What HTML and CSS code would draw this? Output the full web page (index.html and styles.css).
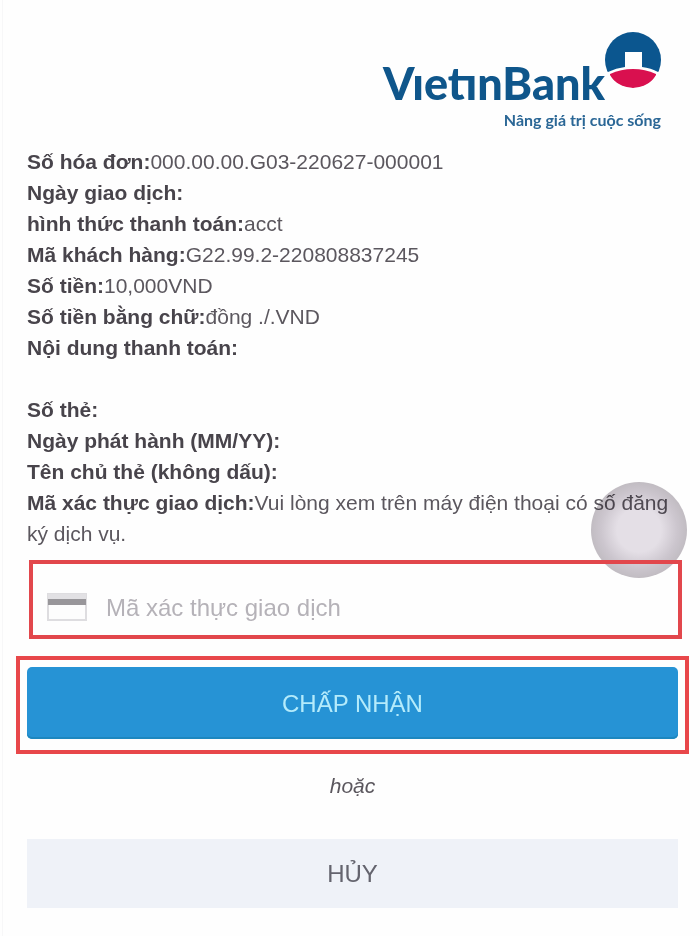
FILE: index.html
```html
<!DOCTYPE html>
<html lang="vi">
<head>
<meta charset="utf-8">
<meta name="viewport" content="width=device-width, initial-scale=1">
<title>VietinBank</title>
<link rel="stylesheet" href="styles.css">
</head>
<body>
<main class="page">
  <header class="brand">
    <div class="brand-row">
      <span class="brand-name">VıetınBank</span>
      <svg class="brand-mark" viewBox="0 0 56 56" aria-hidden="true">
        <defs><clipPath id="disc"><circle cx="28" cy="28" r="28"/></clipPath></defs>
        <g clip-path="url(#disc)">
          <path fill="#0b568f" d="M0 0H56V40H53Q46 36 37 35V20H20V35Q11 36 3 40H0Z"/>
          <path fill="#d9104f" d="M5 42Q16 37 28 37Q40 37 51 42V43Q44 56 28 56Q12 56 5 43Z"/>
        </g>
      </svg>
    </div>
    <p class="tagline">Nâng giá trị cuộc sống</p>
  </header>

  <section class="details">
    <p><b>Số hóa đơn:</b>000.00.00.G03-220627-000001</p>
    <p><b>Ngày giao dịch:</b></p>
    <p><b>hình thức thanh toán:</b>acct</p>
    <p><b>Mã khách hàng:</b>G22.99.2-220808837245</p>
    <p><b>Số tiền:</b>10,000VND</p>
    <p><b>Số tiền bằng chữ:</b>đồng ./.VND</p>
    <p><b>Nội dung thanh toán:</b></p>
  </section>
  <section class="details">
    <p><b>Số thẻ:</b></p>
    <p><b>Ngày phát hành (MM/YY):</b></p>
    <p><b>Tên chủ thẻ (không dấu):</b></p>
    <p><b>Mã xác thực giao dịch:</b>Vui lòng xem trên máy điện thoại có số đăng ký dịch vụ.</p>
  </section>

  <form class="confirm">
    <span class="touch" aria-hidden="true"></span>
    <label class="field">
      <svg class="card-icon" viewBox="0 0 40 28" aria-hidden="true">
        <rect x="1" y="1" width="38" height="26" fill="#fdfdfd" stroke="#dedde0" stroke-width="2"/>
        <path fill="#e2e1e4" d="M1 1H39V6H1Z"/>
        <path fill="#98969a" d="M1 6H39V12H1Z"/>
      </svg>
      <input class="code" type="text" placeholder="Mã xác thực giao dịch" aria-label="Mã xác thực giao dịch">
    </label>
    <div class="highlight">
      <button class="btn accept" type="submit">CHẤP NHẬN</button>
    </div>
    <p class="or">hoặc</p>
    <button class="btn cancel" type="button">HỦY</button>
  </form>
</main>
</body>
</html>
```
FILE: styles.css
```css
* {
  box-sizing: border-box;
}

body {
  margin: 0;
  background: #fefefe;
  color: #5b575e;
  font-family: "Liberation Sans", Arial, sans-serif;
  font-size: 21px;
  line-height: 31px;
}

p {
  margin: 0;
}

.page {
  min-height: 100vh;
  margin-left: 2px;
  padding: 32px 22px 28px 24px;
  border-left: 1px solid #f7f7f8;
}

.brand {
  display: flex;
  flex-direction: column;
  align-items: flex-end;
  padding-right: 17px;
  margin-bottom: 14px;
}

.brand-row {
  display: flex;
  align-items: flex-start;
}

.brand-name {
  padding-top: 27px;
  color: #0f568b;
  font-family: Lato, sans-serif;
  font-size: 45px;
  font-weight: 900;
  line-height: 48px;
}

.brand-mark {
  width: 56px;
  height: 56px;
}

.tagline {
  color: #2b6796;
  font-family: Lato, sans-serif;
  font-size: 16px;
  font-weight: 700;
  line-height: 25px;
}

.details {
  margin-bottom: 31px;
}

.details b {
  color: #48444b;
}

.confirm {
  position: relative;
  margin-top: -20px;
}

/* Translucent floating touch button over the end of the message */
.touch {
  position: absolute;
  top: -78px;
  right: -9px;
  width: 96px;
  height: 96px;
  border-radius: 50%;
  background: radial-gradient(circle, #e5e0e7 22px, #cdc7cf 38px, #c2bdc3 48px);
  mix-blend-mode: multiply;
  pointer-events: none;
}

.field {
  position: relative;
  display: flex;
  align-items: center;
  gap: 19px;
  height: 79px;
  margin: 0 -4px 17px 2px;
  padding: 15px 14px 0;
  border: 4px solid #e2474c;
}

.card-icon {
  flex: none;
  width: 40px;
  height: 28px;
}

.code {
  flex: 1;
  min-width: 0;
  padding: 0;
  border: 0;
  outline: 0;
  background: transparent;
  color: #5b575e;
  font: inherit;
  font-size: 24px;
}

.code::placeholder {
  color: #b5b2b8;
  opacity: 1;
}

.highlight {
  margin: 0 -11px 16px;
  padding: 7px;
  border: 4px solid #e8474a;
}

.btn {
  display: block;
  width: 100%;
  border: 0;
  font: inherit;
  font-size: 24px;
}

.accept {
  height: 72px;
  margin-bottom: 4px;
  border-radius: 5px;
  background: #2693d5;
  box-shadow: inset 0 -2px #1d87bf;
  color: #b4ebfb;
}

.or {
  margin-bottom: 38px;
  font-size: 21px;
  font-style: italic;
  text-align: center;
}

.cancel {
  height: 69px;
  background: #eff2f8;
  color: #64646e;
}
```
